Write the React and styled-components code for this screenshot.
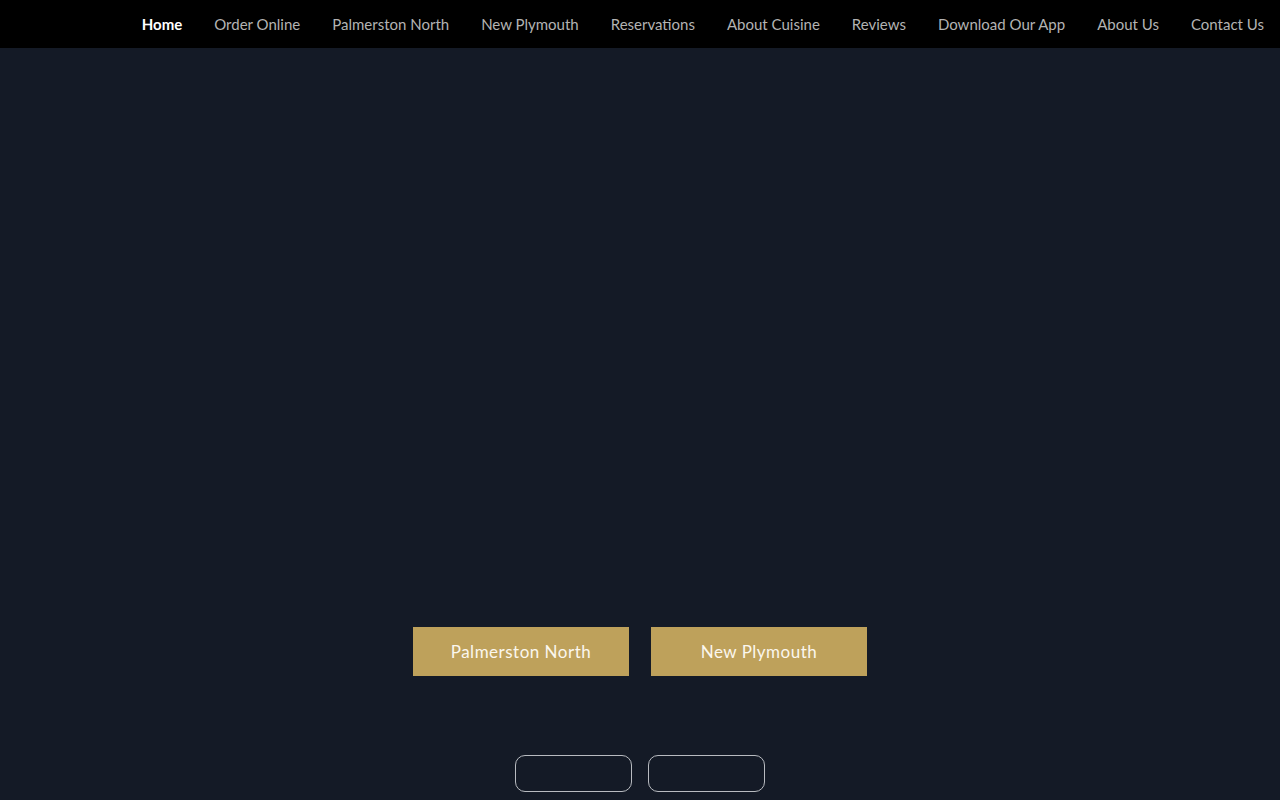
import React from "react";
import styled, { createGlobalStyle } from "styled-components";

const GlobalStyle = createGlobalStyle`
  html, body {
    margin: 0;
    padding: 0;
    background: #141a26;
  }
  * {
    box-sizing: border-box;
  }
`;

const Page = styled.div`
  min-height: 800px;
  background: #141a26;
  overflow: hidden;
`;

const NavBar = styled.nav`
  height: 48px;
  background: #000;
  display: flex;
  align-items: center;
  justify-content: flex-end;
  padding-right: 16px;
  gap: 32px;
`;

const NavLink = styled.a`
  font-family: Lato, "Liberation Sans", sans-serif;
  font-size: 15px;
  font-weight: ${(p) => (p.$active ? 700 : 400)};
  color: ${(p) => (p.$active ? "#ffffff" : "#b3b3b3")};
  text-decoration: none;
  cursor: pointer;
  white-space: nowrap;
`;

const Hero = styled.section`
  height: 628px;
  display: flex;
  flex-direction: column;
  justify-content: flex-end;
  align-items: center;
`;

const LocationRow = styled.div`
  display: flex;
  gap: 22px;
`;

const LocationButton = styled.button`
  width: 216px;
  height: 49px;
  border: none;
  background: #bea15b;
  color: #fbf7ee;
  font-family: Lato, "Liberation Sans", sans-serif;
  font-size: 17px;
  letter-spacing: 0.5px;
  padding-top: 1px;
  cursor: pointer;
`;

const OutlineRow = styled.div`
  display: flex;
  justify-content: center;
  gap: 16px;
  margin-top: 79px;
`;

const OutlineButton = styled.button`
  width: 117px;
  height: 37px;
  border-radius: 10px;
  border: 1px solid #b8bbc0;
  background: transparent;
  cursor: pointer;
`;

const links = [
  "Home",
  "Order Online",
  "Palmerston North",
  "New Plymouth",
  "Reservations",
  "About Cuisine",
  "Reviews",
  "Download Our App",
  "About Us",
  "Contact Us",
];

export default function App() {
  return (
    <Page>
      <GlobalStyle />
      <NavBar>
        {links.map((l, i) => (
          <NavLink key={l} $active={i === 0}>
            {l}
          </NavLink>
        ))}
      </NavBar>
      <Hero>
        <LocationRow>
          <LocationButton>Palmerston North</LocationButton>
          <LocationButton>New Plymouth</LocationButton>
        </LocationRow>
      </Hero>
      <OutlineRow>
        <OutlineButton aria-label="App Store" />
        <OutlineButton aria-label="Google Play" />
      </OutlineRow>
    </Page>
  );
}
